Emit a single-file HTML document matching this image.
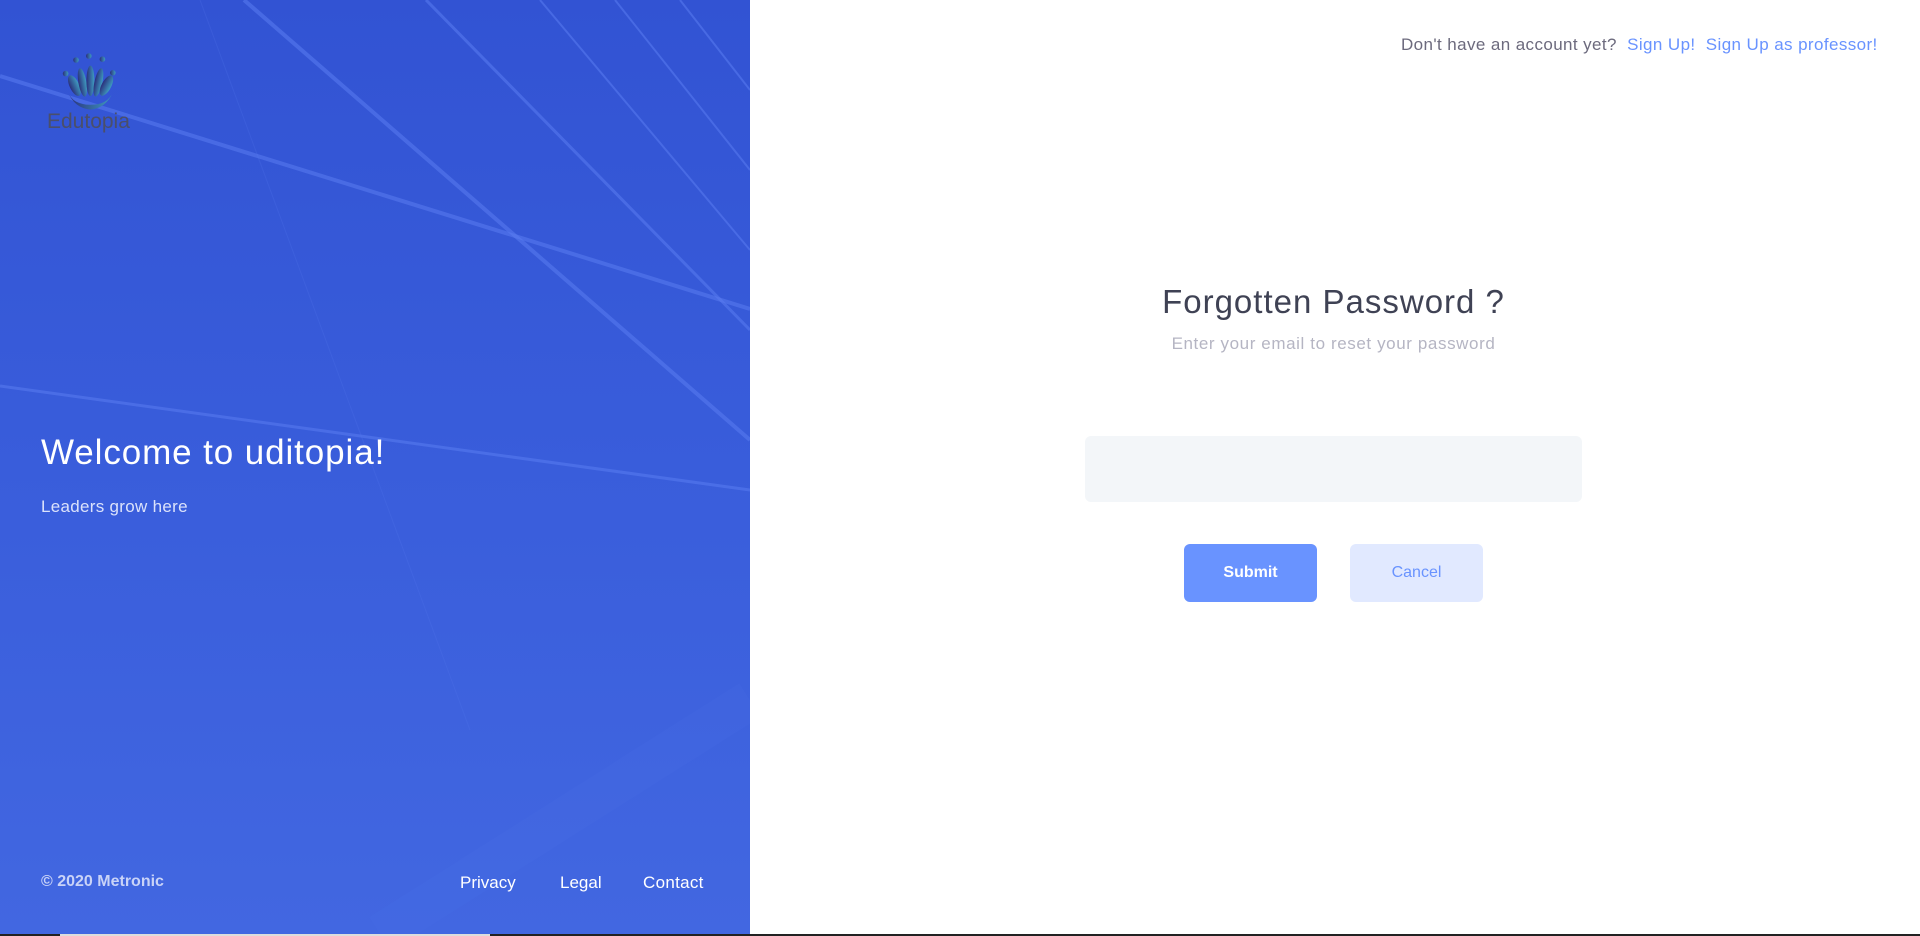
<!DOCTYPE html>
<html><head><meta charset="utf-8"><style>
*{margin:0;padding:0;box-sizing:border-box}
body{width:1920px;height:936px;overflow:hidden;font-family:"Liberation Sans",sans-serif;background:#fff;position:relative}
.left{position:absolute;left:0;top:0;width:750px;height:934px;background:linear-gradient(180deg,#3253d3 0%,#395ddb 50%,#4267e1 100%);overflow:hidden}
.abs{position:absolute;white-space:nowrap}
.strip{position:absolute;left:0;top:934px;width:1920px;height:2px;background:#222}
</style></head><body>
<div class="left">
<svg width="750" height="934" style="position:absolute;left:0;top:0">
<g stroke="#5a7cf0" stroke-opacity="0.55" fill="none">
<line x1="0" y1="76" x2="750" y2="309" stroke-width="4"/>
<line x1="0" y1="386" x2="750" y2="490" stroke-width="3"/>
<line x1="244" y1="0" x2="750" y2="440" stroke-width="4"/>
<line x1="426" y1="0" x2="750" y2="330" stroke-width="3"/>
<line x1="540" y1="0" x2="750" y2="250" stroke-width="2"/>
<line x1="615" y1="0" x2="750" y2="170" stroke-width="2"/>
<line x1="680" y1="0" x2="750" y2="90" stroke-width="2"/>
<line x1="200" y1="0" x2="470" y2="730" stroke-width="1" stroke-opacity="0.2"/>
<line x1="380" y1="934" x2="750" y2="700" stroke-width="40" stroke-opacity="0.08"/>
</g>
</svg>
<svg width="70" height="60" style="position:absolute;left:57px;top:52px" viewBox="0 0 80 75">
<defs><linearGradient id="g" x1="0" x2="1"><stop offset="0" stop-color="#2a2f7a"/><stop offset="1" stop-color="#3f9bc0"/></linearGradient></defs>
<g fill="url(#g)">
<circle cx="7" cy="27" r="3.5"/><circle cx="20" cy="10" r="3.5"/><circle cx="36" cy="5" r="3.5"/><circle cx="53" cy="9" r="3.5"/><circle cx="66" cy="26" r="3.5"/>
<ellipse cx="18" cy="42" rx="6" ry="14" transform="rotate(-25 18 42)"/>
<ellipse cx="28" cy="38" rx="5" ry="18" transform="rotate(-10 28 38)"/>
<ellipse cx="38" cy="36" rx="5" ry="19"/>
<ellipse cx="48" cy="38" rx="5" ry="18" transform="rotate(12 48 38)"/>
<ellipse cx="58" cy="42" rx="6" ry="14" transform="rotate(28 58 42)"/>
<path d="M10 50 Q18 70 38 72 Q58 70 66 50 Q60 66 38 66 Q16 66 10 50Z"/>
</g></svg>
<div class="abs" style="left:47px;top:110px;font-size:21px;color:#4a4f6a">Edutopia</div>
<div class="abs" style="left:41px;top:433px;font-size:35px;letter-spacing:0.9px;color:#fff">Welcome to uditopia!</div>
<div class="abs" style="left:41px;top:497px;font-size:17px;letter-spacing:0.3px;color:#dbe2fb">Leaders grow here</div>
<div class="abs" style="left:41px;top:873px;font-size:16px;font-weight:bold;color:#c9d3f7">© 2020 Metronic</div>
<div class="abs" style="left:460px;top:873px;font-size:17px;color:#fff">Privacy</div>
<div class="abs" style="left:560px;top:873px;font-size:17px;color:#fff">Legal</div>
<div class="abs" style="left:643px;top:873px;font-size:17px;letter-spacing:0.3px;color:#fff">Contact</div>
</div>
<div class="abs" style="left:1401px;top:35px;font-size:17px;letter-spacing:0.4px;color:#6c6a7d">Don't have an account yet?&nbsp; <span style="color:#6993ff">Sign Up!&nbsp; Sign Up as professor!</span></div>
<div class="abs" style="left:1085px;width:497px;top:283px;text-align:center;font-size:33px;letter-spacing:1px;color:#3f4254">Forgotten Password ?</div>
<div class="abs" style="left:1085px;width:497px;top:334px;text-align:center;font-size:17px;letter-spacing:0.6px;color:#b5b5c3">Enter your email to reset your password</div>
<div class="abs" style="left:1085px;top:436px;width:497px;height:66px;background:#f3f6f9;border-radius:6px"></div>
<div class="abs" style="left:1184px;top:544px;width:133px;height:58px;background:#6993ff;border-radius:6px;color:#fff;font-weight:bold;font-size:16px;text-align:center;line-height:58px">Submit</div>
<div class="abs" style="left:1350px;top:544px;width:133px;height:58px;background:#e1e9ff;border-radius:6px;color:#6993ff;font-size:16px;text-align:center;line-height:58px">Cancel</div>
<div class="strip"><div style="position:absolute;left:60px;width:430px;height:2px;background:#ddd"></div></div>
</body></html>
